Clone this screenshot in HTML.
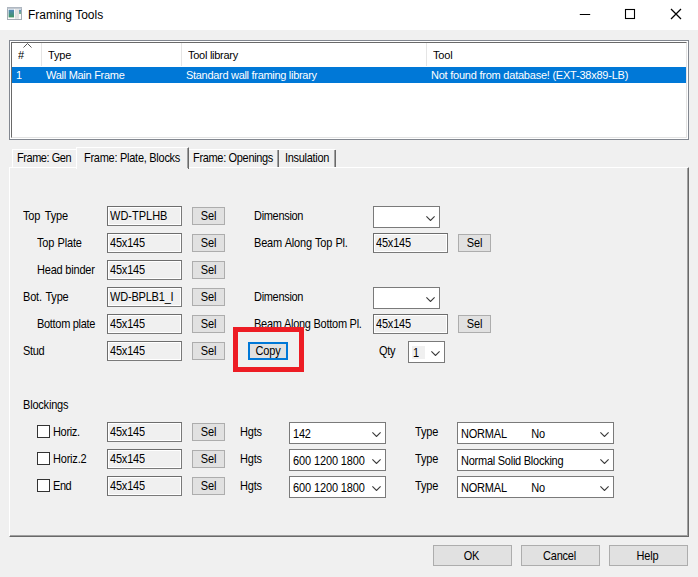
<!DOCTYPE html>
<html><head><meta charset="utf-8">
<style>
html,body{margin:0;padding:0;}
body{width:698px;height:577px;background:#f0f0f0;position:relative;overflow:hidden;font-family:"Liberation Sans",sans-serif;font-size:12px;color:#000;}
.abs{position:absolute;}
.t{position:absolute;white-space:nowrap;line-height:14px;font-size:11px;letter-spacing:-0.2px;}
#title{left:0;top:0;width:698px;height:30px;background:#fff;}
.inp{position:absolute;box-sizing:border-box;height:20px;border:1px solid #7a7a7a;border-top-color:#6d6d6d;border-left-color:#6d6d6d;box-shadow:inset 0 0 0 1px #fff;background:#f0f0f0;font-size:11px;letter-spacing:-0.2px;line-height:15px;padding:2px 0 0 2px;white-space:nowrap;overflow:hidden;}
.inp.w{background:#f0f0f0;}
.btn{position:absolute;box-sizing:border-box;height:18px;width:33px;border:1px solid #adadad;background:#e1e1e1;font-size:11px;letter-spacing:-0.2px;line-height:17px;text-align:center;}
.cmb{position:absolute;box-sizing:border-box;height:22px;border:1px solid #7a7a7a;background:#fff;font-size:11px;letter-spacing:-0.2px;line-height:22px;padding-left:3px;white-space:pre;overflow:hidden;}
.cmb svg{position:absolute;right:4px;top:8.5px;}
.chk{position:absolute;box-sizing:border-box;width:13px;height:13px;border:1px solid #333;background:#fff;}
.big{position:absolute;box-sizing:border-box;height:21px;width:79px;border:1px solid #adadad;background:#e1e1e1;font-size:11px;letter-spacing:-0.2px;line-height:20px;padding-right:2px;text-align:center;}
.s{display:inline-block;line-height:11px;transform:scaleY(1.12);transform-origin:0 9.1px;}
.sl{display:inline-block;line-height:11px;transform:scaleY(1.07);transform-origin:0 9.1px;}
</style></head><body>
<div id="title" class="abs"></div>
<svg class="abs" style="left:7px;top:7px" width="15" height="13" viewBox="0 0 15 13"><defs><linearGradient id="g1" x1="0" y1="0" x2="0" y2="1"><stop offset="0" stop-color="#4f86b8"/><stop offset="1" stop-color="#3f9562"/></linearGradient><linearGradient id="g2" x1="0" y1="0" x2="0" y2="1"><stop offset="0" stop-color="#5b8fc4"/><stop offset="1" stop-color="#7fb98a"/></linearGradient></defs><rect x="0.5" y="0.5" width="14" height="12" fill="#fbfbfb" stroke="#a3abb4"/><rect x="0" y="0.3" width="15" height="1.5" fill="#b4bcc6"/><rect x="1.6" y="2.7" width="5.4" height="7.7" fill="url(#g1)"/><rect x="7.9" y="2.2" width="4" height="9.6" fill="#dedede"/><rect x="9.6" y="2.2" width="0.6" height="9.6" fill="#ececec"/><rect x="12" y="2.7" width="2" height="4.3" fill="url(#g2)"/></svg>
<div class="t" style="left:28px;top:8px;font-size:12px;letter-spacing:0">Framing Tools</div>
<svg class="abs" style="left:569px;top:0" width="129" height="30" viewBox="0 0 129 30"><path d="M10.8 14.5h10.4" stroke="#000" fill="none"/><rect x="56.5" y="9.5" width="9" height="9" stroke="#000" stroke-width="1.1" fill="none"/><path d="M102 9l10 10M112 9l-10 10" stroke="#000" stroke-width="1.25" fill="none"/></svg>

<!-- list -->
<div class="abs" style="left:9px;top:40px;width:680px;height:100px;box-sizing:border-box;border:1px solid #828790;background:#fff;"></div>
<div class="abs" style="left:11px;top:42px;width:676px;height:96px;box-sizing:border-box;border:1px solid #696969;border-bottom-color:#e3e3e3;border-right-color:#e3e3e3;background:#fff"></div>
<div class="abs" style="left:41px;top:43px;width:1px;height:23px;background:#e5e5e5"></div>
<div class="abs" style="left:181px;top:43px;width:1px;height:23px;background:#e5e5e5"></div>
<div class="abs" style="left:426px;top:43px;width:1px;height:23px;background:#e5e5e5"></div>
<svg class="abs" style="left:23px;top:43px" width="9" height="5" viewBox="0 0 9 5"><path d="M0.5 4.5l4-4 4 4" stroke="#555" fill="none"/></svg>
<div class="t" style="left:18px;top:48px"><span class="sl">#</span></div>
<div class="t" style="left:48px;top:48px"><span class="sl">Type</span></div>
<div class="t" style="left:188px;top:48px;letter-spacing:-0.27px"><span class="sl">Tool library</span></div>
<div class="t" style="left:433px;top:48px"><span class="sl">Tool</span></div>
<div class="abs" style="left:12px;top:67px;width:674px;height:16px;background:#0078d7"></div>
<div class="t" style="left:16px;top:68px;color:#fff"><span class="sl">1</span></div>
<div class="t" style="left:46px;top:68px;color:#fff;letter-spacing:-0.28px"><span class="sl">Wall Main Frame</span></div>
<div class="t" style="left:186px;top:68px;color:#fff;letter-spacing:-0.3px"><span class="sl">Standard wall framing library</span></div>
<div class="t" style="left:431px;top:68px;color:#fff;letter-spacing:-0.23px"><span class="sl">Not found from database! (EXT-38x89-LB)</span></div>

<!-- tabs -->
<div class="abs" style="left:9px;top:167px;width:680px;height:370px;box-sizing:border-box;border:1px solid #fff;border-right:1px solid #696969;border-bottom:1px solid #696969;"></div><div class="abs" style="left:10px;top:168px;width:678px;height:368px;box-sizing:border-box;border-right:1px solid #a0a0a0;border-bottom:1px solid #a0a0a0;"></div>
<div class="abs" style="left:76px;top:147px;width:113px;height:22px;box-sizing:border-box;background:#f0f0f0;border-left:1px solid #fff;border-top:1px solid #fff;border-right:1px solid #696969"></div><div class="abs" style="left:187px;top:148px;width:1px;height:20px;background:#a0a0a0"></div>
<div class="abs" style="left:12px;top:149px;width:64px;height:18px;box-sizing:border-box;border-left:1px solid #fff;border-top:1px solid #fff;"></div>
<div class="abs" style="left:277px;top:150px;width:1px;height:17px;background:#a0a0a0"></div><div class="abs" style="left:278px;top:150px;width:1px;height:17px;background:#696969"></div>
<div class="abs" style="left:334px;top:150px;width:1px;height:17px;background:#a0a0a0"></div><div class="abs" style="left:335px;top:150px;width:1px;height:17px;background:#696969"></div>
<div class="abs" style="left:189px;top:149px;width:146px;height:1px;background:#fff"></div>
<div class="t" style="left:17px;top:151px;letter-spacing:-0.45px"><span class="s">Frame: Gen</span></div>
<div class="t" style="left:84px;top:151px;letter-spacing:-0.27px"><span class="s">Frame: Plate, Blocks</span></div>
<div class="t" style="left:193px;top:151px;letter-spacing:-0.33px"><span class="s">Frame: Openings</span></div>
<div class="t" style="left:285px;top:151px;letter-spacing:-0.3px"><span class="s">Insulation</span></div>

<!-- rows -->
<div class="t" style="left:23px;top:209px;word-spacing:2px"><span class="s">Top Type</span></div>
<div class="inp w" style="left:107px;top:206px;width:75px;letter-spacing:0"><span class="s">WD-TPLHB</span></div>
<div class="btn" style="left:192px;top:207px"><span class="s">Sel</span></div>
<div class="t" style="left:254px;top:209px;letter-spacing:-0.31px"><span class="s">Dimension</span></div>
<div class="cmb" style="left:373px;top:206px;width:67px"><svg width="9" height="5" viewBox="0 0 9 5"><path d="M0.4 0.4l4.1 4.1 4.1-4.1" stroke="#3a3a3a" stroke-width="1.1" fill="none"/></svg></div>

<div class="t" style="left:37px;top:236px;word-spacing:0.6px"><span class="s">Top Plate</span></div>
<div class="inp" style="left:107px;top:233px;width:75px"><span class="s">45x145</span></div>
<div class="btn" style="left:192px;top:234px"><span class="s">Sel</span></div>
<div class="t" style="left:254px;top:236px;word-spacing:0.5px"><span class="s">Beam Along Top Pl.</span></div>
<div class="inp" style="left:373px;top:233px;width:75px"><span class="s">45x145</span></div>
<div class="btn" style="left:458px;top:234px"><span class="s">Sel</span></div>

<div class="t" style="left:37px;top:263px"><span class="s">Head binder</span></div>
<div class="inp" style="left:107px;top:260px;width:75px"><span class="s">45x145</span></div>
<div class="btn" style="left:192px;top:261px"><span class="s">Sel</span></div>

<div class="t" style="left:23px;top:290px;word-spacing:1px"><span class="s">Bot. Type</span></div>
<div class="inp w" style="left:107px;top:287px;width:75px"><span class="s">WD-BPLB1_I</span></div>
<div class="btn" style="left:192px;top:288px"><span class="s">Sel</span></div>
<div class="t" style="left:254px;top:290px;letter-spacing:-0.31px"><span class="s">Dimension</span></div>
<div class="cmb" style="left:373px;top:287px;width:67px"><svg width="9" height="5" viewBox="0 0 9 5"><path d="M0.4 0.4l4.1 4.1 4.1-4.1" stroke="#3a3a3a" stroke-width="1.1" fill="none"/></svg></div>

<div class="t" style="left:37px;top:317px;letter-spacing:-0.3px"><span class="s">Bottom plate</span></div>
<div class="inp" style="left:107px;top:314px;width:75px"><span class="s">45x145</span></div>
<div class="btn" style="left:192px;top:315px"><span class="s">Sel</span></div>
<div class="t" style="left:254px;top:317px;letter-spacing:-0.26px"><span class="s">Beam Along Bottom Pl.</span></div>
<div class="inp" style="left:373px;top:314px;width:75px"><span class="s">45x145</span></div>
<div class="btn" style="left:458px;top:315px"><span class="s">Sel</span></div>

<div class="t" style="left:23px;top:344px;letter-spacing:-0.33px"><span class="s">Stud</span></div>
<div class="inp" style="left:107px;top:341px;width:75px"><span class="s">45x145</span></div>
<div class="btn" style="left:192px;top:342px"><span class="s">Sel</span></div>
<div class="btn" style="left:248px;top:342px;width:40px;border:2px solid #0078d7;line-height:15px"><span class="s">Copy</span></div>
<div class="t" style="left:379px;top:344px;letter-spacing:-0.25px"><span class="s">Qty</span></div>
<div class="cmb" style="left:408px;top:341px;width:37px;"><span style="position:absolute;left:3px;top:4px;width:13px;height:13px;background:#f0f0f0"></span><span class="s" style="position:relative;left:1px">1</span><svg width="9" height="5" viewBox="0 0 9 5"><path d="M0.4 0.4l4.1 4.1 4.1-4.1" stroke="#3a3a3a" stroke-width="1.1" fill="none"/></svg></div>
<div class="abs" style="left:233px;top:327px;width:71px;height:45px;box-sizing:border-box;border:5px solid #ed1c24"></div>

<div class="t" style="left:23px;top:398px"><span class="s">Blockings</span></div>

<div class="chk" style="left:37px;top:425px"></div>
<div class="t" style="left:53px;top:425px;letter-spacing:-0.33px"><span class="s">Horiz.</span></div>
<div class="inp" style="left:107px;top:422px;width:75px"><span class="s">45x145</span></div>
<div class="btn" style="left:192px;top:423px"><span class="s">Sel</span></div>
<div class="t" style="left:240px;top:425px"><span class="s">Hgts</span></div>
<div class="cmb" style="left:289px;top:422px;width:97px"><span class="s">142</span><svg width="9" height="5" viewBox="0 0 9 5"><path d="M0.4 0.4l4.1 4.1 4.1-4.1" stroke="#3a3a3a" stroke-width="1.1" fill="none"/></svg></div>
<div class="t" style="left:415px;top:425px"><span class="s">Type</span></div>
<div class="cmb" style="left:457px;top:422px;width:157px"><span class="s" style="word-spacing:0.25px">NORMAL        No</span><svg width="9" height="5" viewBox="0 0 9 5"><path d="M0.4 0.4l4.1 4.1 4.1-4.1" stroke="#3a3a3a" stroke-width="1.1" fill="none"/></svg></div>

<div class="chk" style="left:37px;top:452px"></div>
<div class="t" style="left:53px;top:452px"><span class="s">Horiz.2</span></div>
<div class="inp" style="left:107px;top:449px;width:75px"><span class="s">45x145</span></div>
<div class="btn" style="left:192px;top:450px"><span class="s">Sel</span></div>
<div class="t" style="left:240px;top:452px"><span class="s">Hgts</span></div>
<div class="cmb" style="left:289px;top:449px;width:97px;letter-spacing:-0.12px"><span class="s">600 1200 1800</span><svg width="9" height="5" viewBox="0 0 9 5"><path d="M0.4 0.4l4.1 4.1 4.1-4.1" stroke="#3a3a3a" stroke-width="1.1" fill="none"/></svg></div>
<div class="t" style="left:415px;top:452px"><span class="s">Type</span></div>
<div class="cmb" style="left:457px;top:449px;width:157px;letter-spacing:-0.25px"><span class="s">Normal Solid Blocking</span><svg width="9" height="5" viewBox="0 0 9 5"><path d="M0.4 0.4l4.1 4.1 4.1-4.1" stroke="#3a3a3a" stroke-width="1.1" fill="none"/></svg></div>

<div class="chk" style="left:37px;top:479px"></div>
<div class="t" style="left:53px;top:479px;letter-spacing:-0.45px"><span class="s">End</span></div>
<div class="inp" style="left:107px;top:476px;width:75px"><span class="s">45x145</span></div>
<div class="btn" style="left:192px;top:477px"><span class="s">Sel</span></div>
<div class="t" style="left:240px;top:479px"><span class="s">Hgts</span></div>
<div class="cmb" style="left:289px;top:476px;width:97px;letter-spacing:-0.12px"><span class="s">600 1200 1800</span><svg width="9" height="5" viewBox="0 0 9 5"><path d="M0.4 0.4l4.1 4.1 4.1-4.1" stroke="#3a3a3a" stroke-width="1.1" fill="none"/></svg></div>
<div class="t" style="left:415px;top:479px"><span class="s">Type</span></div>
<div class="cmb" style="left:457px;top:476px;width:157px"><span class="s" style="word-spacing:0.25px">NORMAL        No</span><svg width="9" height="5" viewBox="0 0 9 5"><path d="M0.4 0.4l4.1 4.1 4.1-4.1" stroke="#3a3a3a" stroke-width="1.1" fill="none"/></svg></div>

<div class="big" style="left:433px;top:545px"><span class="s">OK</span></div>
<div class="big" style="left:521px;top:545px"><span class="s">Cancel</span></div>
<div class="big" style="left:609px;top:545px"><span class="s">Help</span></div>
</body></html>
